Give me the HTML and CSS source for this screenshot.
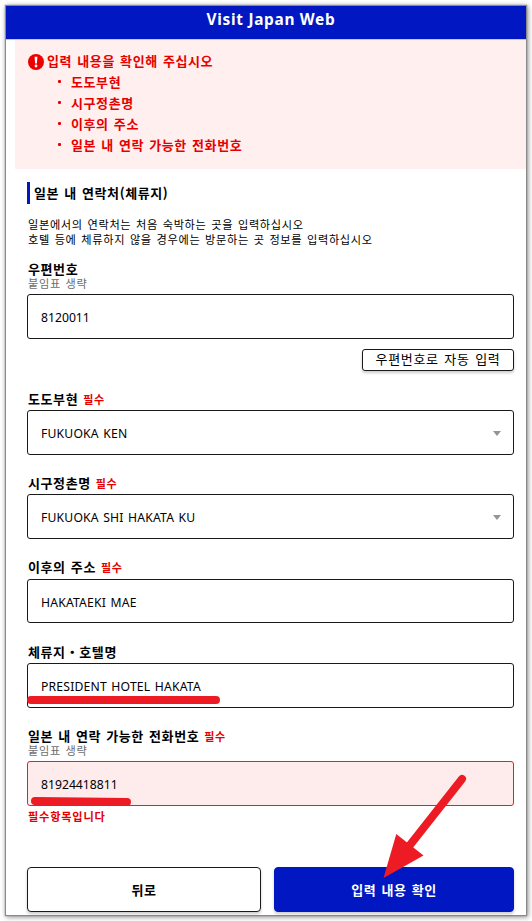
FILE: index.html
```html
<!DOCTYPE html>
<html lang="ko">
<head>
<meta charset="utf-8">
<title>Visit Japan Web</title>
<link rel="stylesheet" href="styles.css">
</head>
<body>
<div class="window">
  <header class="header">Visit Japan Web</header>
  <section class="alert">
    <svg class="alert-icon" viewBox="0 0 16 16"><circle cx="8" cy="8" r="8" fill="#ec0000"/><path d="M6.6 2.8h2.8l-.5 6.6H7.1z" fill="#fff"/><circle cx="8" cy="12" r="1.4" fill="#fff"/></svg>
    <div>
      <p class="strong">입력 내용을 확인해 주십시오</p>
      <ul class="alert-list strong">
        <li>도도부현</li>
        <li>시구정촌명</li>
        <li>이후의 주소</li>
        <li>일본 내 연락 가능한 전화번호</li>
      </ul>
    </div>
  </section>
  <main class="content">
    <h1 class="section-title strong">일본 내 연락처(체류지)</h1>
    <p class="intro small"><span>일본에서의 연락처는 처음 숙박하는 곳을 입력하십시오</span><br><span>호텔 등에 체류하지 않을 경우에는 방문하는 곳 정보를 입력하십시오</span></p>

    <div class="field first">
      <div class="label strong"><span>우편번호</span></div>
      <div class="hint small">붙임표 생략</div>
      <div class="box"><span>8120011</span></div>
      <button class="auto">우편번호로 자동 입력</button>
    </div>
    <div class="field">
      <div class="label strong"><span>도도부현</span><em>필수</em></div>
      <div class="box"><span class="latin">FUKUOKA KEN</span><i class="caret"></i></div>
    </div>
    <div class="field">
      <div class="label strong"><span>시구정촌명</span><em>필수</em></div>
      <div class="box"><span class="latin">FUKUOKA SHI HAKATA KU</span><i class="caret"></i></div>
    </div>
    <div class="field address">
      <div class="label strong"><span>이후의 주소</span><em>필수</em></div>
      <div class="box"><span class="latin">HAKATAEKI MAE</span></div>
    </div>
    <div class="field hotel">
      <div class="label strong"><span>체류지・호텔명</span></div>
      <div class="box"><span class="latin">PRESIDENT HOTEL HAKATA</span></div>
    </div>
    <div class="field phone">
      <div class="label strong"><span>일본 내 연락 가능한 전화번호</span><em>필수</em></div>
      <div class="hint small">붙임표 생략</div>
      <div class="box error"><span>81924418811</span></div>
      <p class="message">필수항목입니다</p>
    </div>
    <div class="actions">
      <button class="action strong">뒤로</button>
      <button class="action primary strong">입력 내용 확인</button>
    </div>
  </main>
</div>
<svg class="marks" viewBox="0 0 532 921">
  <path d="M31 700H216M35 801L127 802" fill="none" stroke="#ed1c24" stroke-width="8" stroke-linecap="round"/>
  <path d="M462 779L410 845" fill="none" stroke="#ed1c24" stroke-width="8" stroke-linecap="round"/>
  <path d="M383.5 878L396.3 834L423.5 855.5Z" fill="#ed1c24"/>
</svg>
</body>
</html>
```
FILE: styles.css
```css
* { box-sizing: border-box; margin: 0; padding: 0; }
body {
  position: relative;
  width: 532px;
  height: 921px;
  padding: 6px;
  overflow: hidden;
  background: #fff;
  color: #000;
  font-family: "Noto Sans", "Noto Sans CJK KR", sans-serif;
}
.window {
  width: 520px;
  height: 909px;
  background: #fff;
  box-shadow: 0 0 1px 1px #8a8a8a, 1px 1px 5px 1px #8a8a8a;
}
.header {
  height: 34px;
  border-bottom: 1px solid #c8c8d0;
  background: #0017c1;
  color: #fff;
  font-weight: 700;
  font-size: 15.4px;
  line-height: 27px;
  letter-spacing: 0.7px;
  text-align: center;
  padding-left: 10px;
}
.strong {
  font-family: "Noto Sans CJK KR", sans-serif;
  font-size: 13px;
  font-weight: 700;
  letter-spacing: 0.6px;
  word-spacing: 0.9px;
}
.small {
  font-family: "Noto Sans CJK KR", sans-serif;
  font-size: 11.2px;
  letter-spacing: 0.65px;
  word-spacing: 1px;
}
.alert {
  display: flex;
  gap: 3px;
  height: 129px;
  margin-left: 9px;
  padding: 10px 13px 0;
  background: #ffefee;
  color: #e60000;
  line-height: 21px;
}
.alert-icon { width: 16px; height: 16px; margin-top: 4px; }
.alert-list { list-style: none; padding-left: 11px; }
.alert-list li { display: flex; align-items: center; }
.alert-list li::before {
  content: "";
  width: 3px;
  height: 3px;
  margin-right: 10px;
  border-radius: 1px;
  background: #e60000;
}
.content { padding: 13px 12px 0 21px; }
.section-title {
  height: 22px;
  padding-left: 4px;
  border-left: 3px solid #0017c1;
  line-height: 22px;
}
.intro { height: 30px; margin-top: 13px; padding-left: 1px; line-height: 15px; white-space: nowrap; }
.field { display: flex; flex-direction: column; height: 84px; }
.first { height: 130px; margin-top: 12px; }
.label { display: flex; align-items: flex-start; gap: 5px; height: 21px; flex: none; line-height: 19px; padding-left: 1px; }
.first .label, .phone .label { height: 19px; }
.label em { color: #e60000; font-style: normal; font-size: 11px; letter-spacing: 0.6px; padding-top: 1px; }
.hint { flex: none; height: 16px; line-height: 11px; padding-left: 1px; color: #6e6e6e; }
.box {
  display: flex;
  align-items: center;
  justify-content: space-between;
  flex: none;
  height: 45px;
  padding: 2px 12px 0 13px;
  border: 1px solid #1a1a1c;
  border-radius: 3px;
  font-size: 12.2px;
  line-height: 18px;
}
.latin { letter-spacing: 0.18px; word-spacing: 1.1px; }
.caret {
  border: 4.5px solid transparent;
  border-top: 5px solid #949494;
  border-bottom: 0;
}
.address { height: 85px; }
.address .label { height: 22px; }
.address .box { height: 44px; padding-top: 4px; }
.box.error { border-color: #e2221e; background: #fdeceb; }
.message { color: #e60000; font: 700 11.2px/21px "Noto Sans CJK KR", sans-serif; letter-spacing: 0.8px; padding-left: 1px; }
.phone { height: 141px; }
.auto {
  align-self: flex-end;
  width: 152px;
  height: 22px;
  margin-top: 10px;
  padding-bottom: 2px;
  border: 1px solid #1a1a1c;
  border-radius: 3px;
  background: #fff;
  box-shadow: 0 2px 3px #0003;
  color: #000;
  font: 400 13px/18px "Noto Sans CJK KR", sans-serif;
  letter-spacing: 0.7px;
  word-spacing: 1.2px;
}
.actions { display: grid; grid-template-columns: 234px 240px; gap: 13px; }
.action {
  height: 45px;
  border: 1px solid #1a1a1c;
  border-radius: 4px;
  background: #fff;
  box-shadow: 0 2px 3px #0003;
  color: #000;
}
.primary { border-color: #0017c1; background: #0017c1; color: #fff; }
.marks { position: absolute; left: 0; top: 0; width: 532px; height: 921px; pointer-events: none; }
```
